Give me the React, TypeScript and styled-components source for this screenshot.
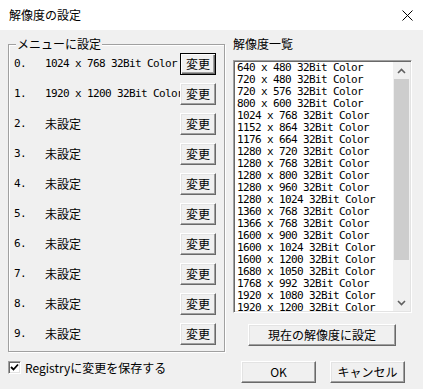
import React from 'react';
import styled, { createGlobalStyle, css } from 'styled-components';

const UI = `"Noto Sans CJK JP", "Liberation Sans", sans-serif`;
const MONO = `"DejaVu Sans Mono", "Noto Sans CJK JP", monospace`;

const GlobalStyle = createGlobalStyle`
  html, body {
    margin: 0;
    padding: 0;
    background: #f0f0f0;
  }
  body {
    font-family: ${UI};
    font-size: 12px;
    color: #000;
  }
`;

const Window = styled.div`
  width: 423px;
  height: 389px;
  background: #f0f0f0;
  overflow: hidden;
  display: flex;
  flex-direction: column;
`;

const TitleBar = styled.div`
  flex: none;
  height: 30px;
  background: #fff;
  display: flex;
  align-items: center;
  justify-content: space-between;
  padding: 0 10px 0 9px;
`;

const Title = styled.span`
  font: 12px/16px ${UI};
`;

const Main = styled.div`
  display: flex;
  padding: 7px 11px 0 8px;
`;

const LeftCol = styled.div`
  padding-top: 7px;
`;

const Group = styled.div`
  position: relative;
  box-sizing: border-box;
  width: 217px;
  height: 308px;
  padding: 4px 8px 2px 5px;
  border: 1px solid #a0a0a0;
  box-shadow: inset 1px 1px #fff, 1px 1px #fff;
`;

const Legend = styled.span`
  position: absolute;
  top: -9px;
  left: 7px;
  padding: 0 1px;
  background: #f0f0f0;
  font: 12px/16px ${UI};
`;

const Row = styled.div`
  display: flex;
  align-items: center;
  height: 30px;
`;

const Num = styled.span`
  width: 31px;
  font: 11px/18px ${MONO};
  letter-spacing: -0.62px;
`;

const Name = styled.span<{ $jp?: boolean }>`
  width: 135px;
  overflow: hidden;
  white-space: nowrap;
  ${p =>
    p.$jp
      ? css`
          font: 12px/18px ${UI};
        `
      : css`
          font: 11px/18px ${MONO};
          letter-spacing: -0.62px;
        `}
`;

const Btn = styled.button<{ $w: number; $default?: boolean }>`
  box-sizing: border-box;
  width: ${p => p.$w}px;
  height: 22px;
  margin: 0;
  padding: 0;
  flex: none;
  background: #f0f0f0;
  color: #000;
  font: 12px/16px ${UI};
  border: 1px solid;
  ${p =>
    p.$default
      ? css`
          border-color: #000;
          box-shadow: inset 1px 1px #fff, inset -1px -1px #696969, inset -2px -2px #a0a0a0;
        `
      : css`
          border-color: #fff #696969 #696969 #fff;
          box-shadow: inset -1px -1px #a0a0a0, inset 1px 1px #e3e3e3;
        `}
`;

const RightCol = styled.div`
  width: 179px;
  margin-left: 8px;
  display: flex;
  flex-direction: column;
`;

const ListTitle = styled.span`
  height: 14px;
  font: 12px/14px ${UI};
`;

const ListBox = styled.div`
  box-sizing: border-box;
  margin-top: 9px;
  height: 253px;
  border: 1px solid;
  border-color: #a0a0a0 #fff #fff #a0a0a0;
  box-shadow: inset 1px 1px #696969, inset -1px -1px #e3e3e3;
  padding: 1px;
  display: flex;
`;

const Items = styled.div`
  flex: 1;
  background: #fff;
  overflow: hidden;
  padding-left: 2px;
`;

const Item = styled.div`
  height: 12px;
  font: 11px/12px ${MONO};
  letter-spacing: -0.62px;
  white-space: pre;
`;

const ScrollBar = styled.div`
  width: 17px;
  background: #f0f0f0;
  display: flex;
  flex-direction: column;
`;

const Arrow = styled.div`
  height: 17px;
  display: flex;
  align-items: center;
  justify-content: center;
`;

const Track = styled.div`
  flex: 1;
  padding: 0 1px;
`;

const Thumb = styled.div`
  height: 181px;
  background: #cdcdcd;
`;

const SetCurrent = styled(Btn)`
  margin: 11px 0 0 15px;
`;

const Footer = styled.div`
  display: flex;
  justify-content: space-between;
  align-items: flex-start;
  padding: 9px 18px 0 8px;
`;

const Check = styled.label`
  display: flex;
  align-items: center;
  gap: 4px;
  height: 13px;
  font: 12px/16px ${UI};
`;

const Box = styled.span`
  box-sizing: border-box;
  width: 13px;
  height: 13px;
  background: #fff;
  border: 1px solid;
  border-color: #a0a0a0 #fff #fff #a0a0a0;
  box-shadow: inset 1px 1px #696969, inset -1px -1px #e3e3e3;
  display: flex;
  align-items: center;
  justify-content: center;
`;

const Actions = styled.div`
  display: flex;
  gap: 14px;
`;

const slots: (string | null)[] = [
  '1024 x 768 32Bit Color',
  '1920 x 1200 32Bit Color',
  null, null, null, null, null, null, null, null,
];

const modes = [
  '640 x 480', '720 x 480', '720 x 576', '800 x 600', '1024 x 768',
  '1152 x 864', '1176 x 664', '1280 x 720', '1280 x 768', '1280 x 800',
  '1280 x 960', '1280 x 1024', '1360 x 768', '1366 x 768', '1600 x 900',
  '1600 x 1024', '1600 x 1200', '1680 x 1050', '1768 x 992', '1920 x 1080',
  '1920 x 1200', '1920 x 1440', '2048 x 1536', '2560 x 1440',
];

const Chevron = ({ up }: { up?: boolean }) => (
  <svg width="9" height="6" viewBox="0 0 9 6">
    <path
      d={up ? 'M1 5 L4.5 1.5 L8 5' : 'M1 1 L4.5 4.5 L8 1'}
      fill="none"
      stroke="#606060"
      strokeWidth="1.6"
    />
  </svg>
);

export default function App() {
  return (
    <>
      <GlobalStyle />
      <Window>
        <TitleBar>
          <Title>解像度の設定</Title>
          <svg width="11" height="11" viewBox="0 0 11 11">
            <path d="M0.5 0.5 L10.5 10.5 M10.5 0.5 L0.5 10.5" stroke="#000" strokeWidth="1" />
          </svg>
        </TitleBar>

        <Main>
          <LeftCol>
            <Group>
              <Legend>メニューに設定</Legend>
              {slots.map((s, i) => (
                <Row key={i}>
                  <Num>{i}.</Num>
                  {s ? <Name>{s}</Name> : <Name $jp>未設定</Name>}
                  <Btn $w={36} $default={i === 0}>変更</Btn>
                </Row>
              ))}
            </Group>
          </LeftCol>

          <RightCol>
            <ListTitle>解像度一覧</ListTitle>
            <ListBox>
              <Items>
                {modes.map(m => (
                  <Item key={m}>{m} 32Bit Color</Item>
                ))}
              </Items>
              <ScrollBar>
                <Arrow><Chevron up /></Arrow>
                <Track><Thumb /></Track>
                <Arrow><Chevron /></Arrow>
              </ScrollBar>
            </ListBox>
            <SetCurrent $w={148}>現在の解像度に設定</SetCurrent>
          </RightCol>
        </Main>

        <Footer>
          <Check>
            <Box>
              <svg width="9" height="9" viewBox="0 0 9 9">
                <path d="M1 4 L3.5 6.5 L8 1.5" fill="none" stroke="#000" strokeWidth="1.8" />
              </svg>
            </Box>
            Registryに変更を保存する
          </Check>
          <Actions>
            <Btn $w={75}>OK</Btn>
            <Btn $w={75}>キャンセル</Btn>
          </Actions>
        </Footer>
      </Window>
    </>
  );
}
